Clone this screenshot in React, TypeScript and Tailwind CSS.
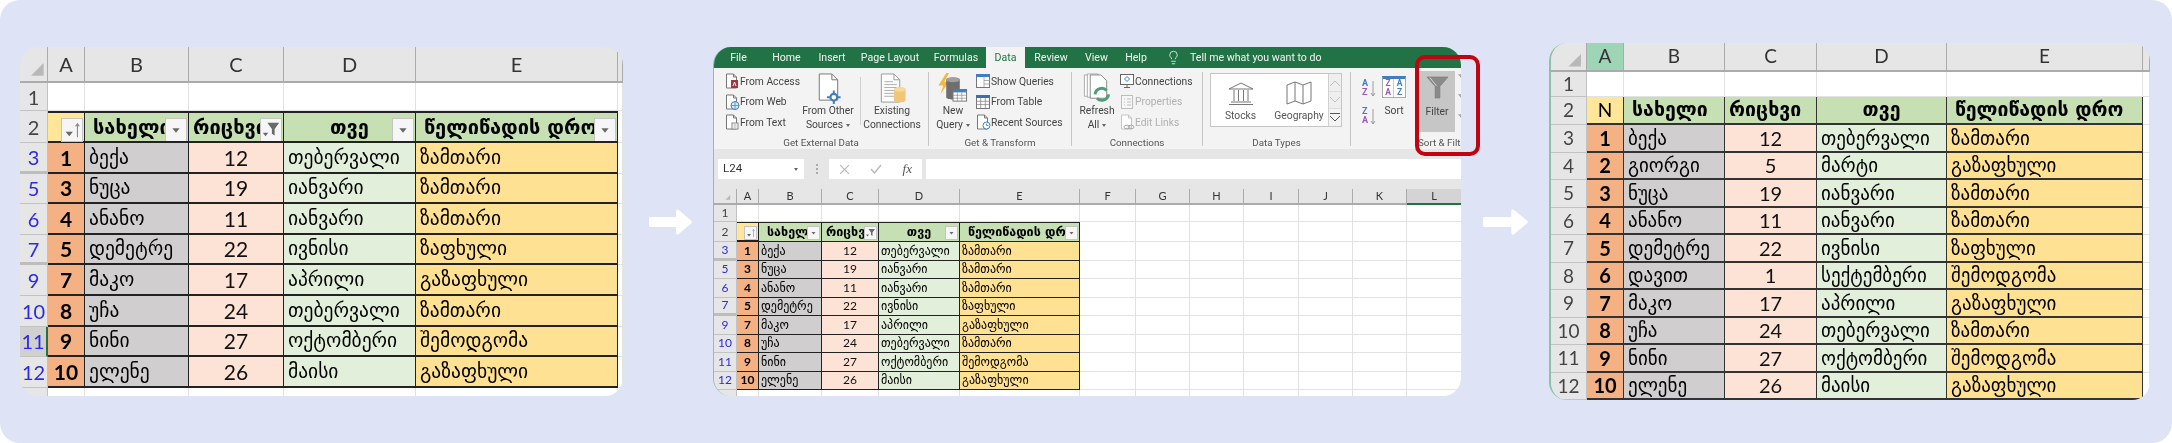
import React from "react";
import { Lightbulb } from "lucide-react";

type P = [number, string, number, string, string];
const people: P[] = [
  [1, "ბექა", 12, "თებერვალი", "ზამთარი"],
  [2, "გიორგი", 5, "მარტი", "გაზაფხული"],
  [3, "ნუცა", 19, "იანვარი", "ზამთარი"],
  [4, "ანანო", 11, "იანვარი", "ზამთარი"],
  [5, "დემეტრე", 22, "ივნისი", "ზაფხული"],
  [6, "დავით", 1, "სექტემბერი", "შემოდგომა"],
  [7, "მაკო", 17, "აპრილი", "გაზაფხული"],
  [8, "უჩა", 24, "თებერვალი", "ზამთარი"],
  [9, "ნინი", 27, "ოქტომბერი", "შემოდგომა"],
  [10, "ელენე", 26, "მაისი", "გაზაფხული"],
];

const KA = "font-['DejaVu_Sans',sans-serif]";
const LA = "font-['Lato',sans-serif]";
const UI = "font-['Roboto',sans-serif]";

function FilterBtn({ kind, cls }: { kind: "down" | "funnel" | "sort"; cls: string }) {
  return (
    <span className={"absolute bg-[#f6f6f6] border border-[#c4c4c4] " + cls}>
      <svg viewBox="0 0 22 24" className="w-full h-full block">
        {kind === "down" && <path d="M7 10h8l-4 5z" fill="#6a6a6a" />}
        {kind === "funnel" && (
          <>
            <path d="M7 4h13l-5 7v7l-3-2v-5z" fill="#6a6a6a" />
            <path d="M2 15h6l-3 4z" fill="#6a6a6a" />
          </>
        )}
        {kind === "sort" && (
          <>
            <path d="M4 14h8l-4 5z" fill="#6a6a6a" />
            <path d="M17 20V5M15 8l2-3 2 3" stroke="#8a8a8a" strokeWidth="1.2" fill="none" />
          </>
        )}
      </svg>
    </span>
  );
}

type Cfg = {
  grid: string;
  size: string;
  cols: string[];
  rows: number[];
  filter: boolean;
  blueRows: boolean;
  colText: string;
  rowText: string;
  bodyText: string;
  numText: string;
  boldText: string;
  headText: string;
  line: string;
  pad: string;
  btn: string;
  selectedRow?: number;
  thick: number[];
  selectedCol?: boolean;
  partial: boolean;
  headTop: string;
};

function Sheet({ c }: { c: Cfg }) {
  const rh = "flex items-center justify-center bg-[#e6e6e6] border-b border-r border-[#c2c2c2] text-[#444] " + LA + " " + c.rowText;
  const blank = "bg-white border-b border-r border-[#e2e2e2]";
  const headNames = ["სახელი", "რიცხვი", "თვე", "წელიწადის დრო"];
  const kinds: ("down" | "funnel")[] = ["down", "funnel", "down", "down"];
  const extras = c.cols.slice(5);
  return (
    <div className={"grid " + c.grid + " " + c.size}>
      <div className="bg-[#e6e6e6] border-b-2 border-r border-[#ababab] flex items-end justify-end p-[3px]">
        <svg viewBox="0 0 10 10" className="w-[60%] h-[60%] block">
          <path d="M10 0v10H0z" fill="#b8b8b8" />
        </svg>
      </div>
      {c.cols.map((l, i) => (
        <div
          key={i}
          className={
            "flex items-center justify-center border-b-2 border-r border-[#ababab] text-[#333] " +
            LA + " " + c.colText + " " +
            (c.selectedCol && l === "A" ? "bg-[#9fd5b7]" : l === "L" ? "bg-[#d4d4d4] !border-b-[#217346]" : "bg-[#e6e6e6]")
          }
        >
          {l}
        </div>
      ))}

      <div className={rh}>1</div>
      {c.cols.map((_, i) => (
        <div key={i} className={blank} />
      ))}

      <div className={rh}>2</div>
      <div className={"relative flex items-center justify-center bg-[#ffe699] border-r border-b-2 text-black " + c.headTop + " " + c.line + " " + LA + " " + c.rowText}>
        {c.filter ? <FilterBtn kind="sort" cls={c.btn} /> : "N"}
      </div>
      {headNames.map((h, i) => (
        <div
          key={h}
          className={
            "relative flex items-center overflow-hidden whitespace-nowrap bg-[#c6e0b4] text-black font-bold " +
            c.headTop + " " + c.line + " " + KA + " " + c.headText + " " + (i === 2 ? "justify-center" : i === 1 ? "pl-[4px]" : "pl-[8px]")
          }
        >
          {h}
          {c.filter && <FilterBtn kind={kinds[i]} cls={c.btn} />}
        </div>
      ))}
      {extras.map((_, i) => (
        <div key={i} className={blank} />
      ))}

      {people
        .filter((p) => c.rows.includes(p[0]))
        .map((p) => {
          const n = p[0] + 2;
          const sel = c.selectedRow === n;
          return (
            <React.Fragment key={n}>
              <div
                className={
                  "flex items-center justify-center " + LA + " " + c.rowText + " " +
                  (c.blueRows ? "text-[#2a2ae8] " : "text-[#444] ") +
                  (sel ? "bg-[#d0d0d0] border-r-2 border-[#217346] " : "bg-[#e6e6e6] border-r border-[#c2c2c2] ") +
                  (c.thick.includes(n) ? "border-b-[3px] border-b-[#bdbdbd]" : "border-b border-b-[#c2c2c2]")
                }
              >
                {n}
              </div>
              <div className={"flex items-center justify-center bg-[#f4b183] text-black font-bold " + LA + " " + c.boldText + " " + c.line}>{p[0]}</div>
              <div className={"flex items-center whitespace-nowrap overflow-hidden bg-[#d0cece] text-black " + KA + " " + c.bodyText + " " + c.pad + " " + c.line}>{p[1]}</div>
              <div className={"flex items-center justify-center bg-[#fde3d6] text-[#111] " + LA + " " + c.numText + " " + c.line}>{p[2]}</div>
              <div className={"flex items-center whitespace-nowrap overflow-hidden bg-[#e2efda] text-black " + KA + " " + c.bodyText + " " + c.pad + " " + c.line}>{p[3]}</div>
              <div className={"flex items-center whitespace-nowrap overflow-hidden bg-[#ffe193] text-black " + KA + " " + c.bodyText + " " + c.pad + " " + c.line}>{p[4]}</div>
              {extras.map((_, i) => (
                <div key={i} className={blank} />
              ))}
            </React.Fragment>
          );
        })}

      {c.partial && (
        <>
          <div className="bg-[#e6e6e6] border-r border-[#c2c2c2]" />
          {c.cols.map((_, i) => (
            <div key={i} className="bg-white border-r border-[#e2e2e2]" />
          ))}
        </>
      )}
    </div>
  );
}

const filtered = [1, 3, 4, 5, 7, 8, 9, 10];

const leftCfg: Cfg = {
  grid: "grid-cols-[28px_37px_104px_95px_132px_202px_5px] grid-rows-[36px_28px_32px_repeat(8,30.6px)_8px]",
  size: "w-[603px] h-[349px]",
  cols: ["A", "B", "C", "D", "E", ""],
  rows: filtered,
  filter: true,
  blueRows: true,
  colText: "text-[20px]",
  rowText: "text-[20px]",
  bodyText: "text-[19.5px]",
  numText: "text-[21px]",
  boldText: "text-[21px]",
  headText: "text-[20px]",
  line: "border-b-2 border-r border-[#222]",
  pad: "pl-[4px]",
  btn: "right-[1px] top-[5px] w-[22px] h-[24px]",
  selectedRow: 11,
  thick: [3, 7],
  partial: true,
  headTop: "border-t-2 border-t-[#222]",
};

const midCfg: Cfg = {
  grid: "grid-cols-[23px_22px_63px_57px_81px_120px_56px_54px_54px_55px_54px_54px_55px] grid-rows-[16px_17px_20px_repeat(8,18.5px)_6px]",
  size: "w-[748px] h-[207px]",
  cols: ["A", "B", "C", "D", "E", "F", "G", "H", "I", "J", "K", "L"],
  rows: filtered,
  filter: true,
  blueRows: true,
  colText: "text-[11px]",
  rowText: "text-[12px]",
  bodyText: "text-[12px]",
  numText: "text-[12px]",
  boldText: "text-[12px]",
  headText: "text-[12.5px]",
  line: "border-b border-r border-[#222]",
  pad: "pl-[2px]",
  btn: "right-[1px] top-[3px] w-[13px] h-[14px]",
  thick: [3, 7],
  partial: true,
  headTop: "border-t border-t-[#222]",
};

const rightCfg: Cfg = {
  grid: "grid-cols-[36px_37px_101px_92px_130px_196px_7px] grid-rows-[29px_25px_28px_repeat(10,27.5px)]",
  size: "w-[599px] h-[357px]",
  cols: ["A", "B", "C", "D", "E", ""],
  rows: [1, 2, 3, 4, 5, 6, 7, 8, 9, 10],
  filter: false,
  blueRows: false,
  colText: "text-[19px]",
  rowText: "text-[19px]",
  bodyText: "text-[19px]",
  numText: "text-[20px]",
  boldText: "text-[20px]",
  headText: "text-[19.5px]",
  line: "border-b-2 border-r border-[#333]",
  pad: "pl-[4px]",
  btn: "",
  thick: [],
  selectedCol: true,
  partial: false,
  headTop: "",
};

function Doc({ children, c = "#777" }: { children?: React.ReactNode; c?: string }) {
  return (
    <svg viewBox="0 0 16 16" className="w-[16px] h-[16px] block">
      <path d="M2.5 1h7l3 3v11h-10z" fill="#fff" stroke={c} strokeWidth="1" />
      <path d="M9.5 1v3h3" fill="none" stroke={c} strokeWidth="1" />
      {children}
    </svg>
  );
}

const icoAccess = <Doc><rect x="7" y="7" width="7" height="8" fill="#a4373a" /><path d="M9 13l1.5-4 1.5 4" stroke="#fff" fill="none" /></Doc>;
const icoWeb = <Doc><circle cx="11" cy="11.5" r="4" fill="#dbe8f5" stroke="#3f7fbf" /><path d="M7 11.5h8M11 7.5v8" stroke="#3f7fbf" strokeWidth=".7" /></Doc>;
const icoText = <Doc><rect x="8" y="9" width="6" height="6" fill="#fff" stroke="#888" /><path d="M9.5 11h3M9.5 13h3" stroke="#888" strokeWidth=".7" /></Doc>;
const icoShow = (
  <svg viewBox="0 0 16 16" className="w-[16px] h-[16px] block">
    <rect x="1.5" y="1.5" width="13" height="13" fill="#fff" stroke="#777" />
    <rect x="1" y="1" width="14" height="3" fill="#3f7fbf" />
    <path d="M9 4v10M9 7.5h6M9 11h6" stroke="#999" strokeWidth=".8" />
  </svg>
);
const icoTable = (
  <svg viewBox="0 0 16 16" className="w-[16px] h-[16px] block">
    <rect x="1.5" y="1.5" width="13" height="13" fill="#fff" stroke="#777" />
    <rect x="1" y="1" width="14" height="3" fill="#3f6f9f" />
    <path d="M5.7 4v10M10.3 4v10M1.5 7.3h13M1.5 10.6h13" stroke="#888" strokeWidth=".8" />
  </svg>
);
const icoRecent = <Doc><circle cx="11.5" cy="11.5" r="3.5" fill="#fff" stroke="#3f7fbf" /><path d="M11.5 9.5v2h2" stroke="#3f7fbf" strokeWidth=".8" fill="none" /></Doc>;
const icoConn = (
  <svg viewBox="0 0 16 16" className="w-[16px] h-[16px] block">
    <rect x="1.5" y="1.5" width="13" height="10" fill="#fff" stroke="#666" />
    <path d="M5 14.5h6M8 11.5v3" stroke="#666" />
    <path d="M8 3.5l2.5 2.5L8 8.5 5.500 6z" fill="none" stroke="#3f7fbf" />
  </svg>
);
const icoProps = (
  <svg viewBox="0 0 16 16" className="w-[16px] h-[16px] block">
    <rect x="2.500" y="1.500" width="11" height="13" fill="#f7f7f7" stroke="#bdbdbd" />
    <path d="M5 5h1M8 5h4M5 8h1M8 8h4M5 11h1M8 11h4" stroke="#bdbdbd" />
  </svg>
);
const icoLinks = <Doc c="#c4c4c4"><ellipse cx="8" cy="13" rx="3" ry="1.800" fill="none" stroke="#aaa" /><ellipse cx="12" cy="13" rx="3" ry="1.800" fill="none" stroke="#aaa" /></Doc>;

function Small({ icon, label, muted }: { icon: React.ReactNode; label: string; muted?: boolean }) {
  return (
    <div className={"flex items-center h-[20.500px] gap-[1px] whitespace-nowrap " + (muted ? "text-[#b0b0b0]" : "text-[#444]")}>
      <span className="w-[15px] shrink-0">{icon}</span>
      <span>{label}</span>
    </div>
  );
}

function Big({ icon, a, b, cls }: { icon: React.ReactNode; a: string; b: React.ReactNode; cls: string }) {
  return (
    <div className={"flex flex-col items-center shrink-0 pt-[5px] text-[#444] leading-[14px] whitespace-nowrap " + cls}>
      <div className="h-[31px] flex items-center justify-center">{icon}</div>
      <div>{a}</div>
      <div>{b}</div>
    </div>
  );
}

function Caret() {
  return <span className="inline-block align-middle ml-[3px] w-0 h-0 border-l-[2.500px] border-r-[2.500px] border-t-[3px] border-l-transparent border-r-transparent border-t-[#666]" />;
}

function Group({ w, label, children, labelCls }: { w: string; label: string; children: React.ReactNode; labelCls?: string }) {
  return (
    <div className={"flex flex-col shrink-0 overflow-hidden " + w}>
      <div className="flex h-[68px]">{children}</div>
      <div className={"h-[13px] leading-[13px] text-[9.800px] text-[#555] whitespace-nowrap " + (labelCls ?? "text-center")}>{label}</div>
    </div>
  );
}

function Sep() {
  return <div className="w-px shrink-0 mt-[4px] mb-[3px] bg-[#c6c6c6]" />;
}

function Funnel({ cls, c = "#8a8a8a" }: { cls: string; c?: string }) {
  return (
    <svg viewBox="0 0 24 24" className={cls}>
      <path d="M1 1h22l-8.500 10v12h-5V11z" fill={c} stroke="#777" strokeWidth=".6" />
      <path d="M4 1.500l7 9" stroke="#d8d8d8" strokeWidth="1" />
    </svg>
  );
}

function AZ({ top, bottom }: { top: string; bottom: string }) {
  return (
    <div className="relative h-[20px] w-[14px] text-[9px] leading-[9px] font-bold">
      <div className="text-[#3f7fbf]">{top}</div>
      <div className="text-[#9b59b6]">{bottom}</div>
      <svg viewBox="0 0 6 18" className="absolute left-[8px] top-[1px] w-[6px] h-[18px]">
        <path d="M3 1v15M1 13l2 3 2-3" stroke="#888" fill="none" strokeWidth=".8" />
      </svg>
    </div>
  );
}

function Ribbon() {
  const tabs: [string, string][] = [
    ["File", "w-[49px]"],
    ["Home", "w-[47px]"],
    ["Insert", "w-[44px]"],
    ["Page Layout", "w-[72px]"],
    ["Formulas", "w-[60px]"],
    ["Data", "w-[39px]"],
    ["Review", "w-[52px]"],
    ["View", "w-[39px]"],
    ["Help", "w-[40px]"],
  ];
  return (
    <div className={UI + " text-[10.300px]"}>
      <div className="flex h-[21px] bg-[#217346] text-[#f0f6f2] text-[10.600px]">
        {tabs.map(([t, w]) => (
          <div key={t} className={"flex items-center justify-center " + w + (t === "Data" ? " bg-[#f3f3f3] text-[#217346]" : "")}>{t}</div>
        ))}
        <div className="w-[34px] flex items-center justify-center">
          <Lightbulb size={15} strokeWidth={1.300} />
        </div>
        <div className="flex items-center whitespace-nowrap">Tell me what you want to do</div>
      </div>
      <div className="flex h-[81px] bg-[#f3f3f3]">
        <Group w="w-[214px]" label="Get External Data">
          <div className="pl-[10px] pt-[3px] w-[86px] shrink-0">
            <Small icon={icoAccess} label="From Access" />
            <Small icon={icoWeb} label="From Web" />
            <Small icon={icoText} label="From Text" />
          </div>
          <Big
            cls="w-[56px]"
            icon={
              <svg viewBox="0 0 30 32" className="w-[30px] h-[31px]">
                <path d="M6 1h13l6 6v21H6z" fill="#fff" stroke="#777" />
                <path d="M19 1v6h6" fill="none" stroke="#777" />
                <circle cx="21" cy="25" r="3.500" fill="#fff" stroke="#3f7fbf" strokeWidth="2.200" />
                <path d="M21 18v3M21 29v3M14 25h3M25 25h3" stroke="#3f7fbf" strokeWidth="2" />
              </svg>
            }
            a="From Other"
            b={<>Sources<Caret /></>}
          />
          <div className="w-px h-[48px] mt-[9px] ml-[4px] bg-[#d0d0d0] shrink-0" />
          <Big
            cls="w-[62px]"
            icon={
              <svg viewBox="0 0 30 32" className="w-[30px] h-[31px]">
                <path d="M4 1h13l6 6v23H4z" fill="#fff" stroke="#999" />
                <path d="M17 1v6h6" fill="none" stroke="#999" />
                <path d="M7 9h9M7 12h13M7 15h13M7 18h10M7 21h10M7 24h10" stroke="#aaa" />
                <path d="M17 17c0-3 12-3 12 0v11c0 3-12 3-12 0z" fill="#f2c678" />
                <ellipse cx="23" cy="17" rx="6" ry="2.200" fill="#f7d999" />
              </svg>
            }
            a="Existing"
            b="Connections"
          />
        </Group>
        <Sep />
        <Group w="w-[142px]" label="Get & Transform">
          <Big
            cls="w-[44px] ml-[2px]"
            icon={
              <svg viewBox="0 0 30 32" className="w-[30px] h-[31px]">
                <path d="M8 0L0 13h5l-3 9 9-13H6l5-9z" fill="#f2b844" />
                <path d="M8 7c0-3 14-3 14 0v18c0 3-14 3-14 0z" fill="#6e6e6e" />
                <ellipse cx="15" cy="7" rx="7" ry="2.500" fill="#a0a0a0" />
                <rect x="15" y="17" width="14" height="12" fill="#fff" stroke="#777" />
                <rect x="15" y="17" width="14" height="3" fill="#3f7fbf" />
                <path d="M19.500 20v9M24 20v9M15 23h14M15 26h14" stroke="#888" strokeWidth=".7" />
              </svg>
            }
            a="New"
            b={<>Query<Caret /></>}
          />
          <div className="pt-[3px]">
            <Small icon={icoShow} label="Show Queries" />
            <Small icon={icoTable} label="From Table" />
            <Small icon={icoRecent} label="Recent Sources" />
          </div>
        </Group>
        <Sep />
        <Group w="w-[130px]" label="Connections">
          <Big
            cls="w-[40px] ml-[5px]"
            icon={
              <svg viewBox="0 0 30 32" className="w-[30px] h-[31px]">
                <path d="M2 2h11v22H2z" fill="#fff" stroke="#aaa" />
                <path d="M5 1h11v24H5z" fill="#fff" stroke="#aaa" />
                <path d="M8 2h11l6 6v18H8z" fill="#fff" stroke="#888" />
                <path d="M13 22a7 7 0 0 1 12-4" fill="none" stroke="#4f9d7a" strokeWidth="3" />
                <path d="M27 22a7 7 0 0 1-12 4" fill="none" stroke="#4f9d7a" strokeWidth="3" />
              </svg>
            }
            a="Refresh"
            b={<>All<Caret /></>}
          />
          <div className="pl-[2px] pt-[3px]">
            <Small icon={icoConn} label="Connections" />
            <Small icon={icoProps} label="Properties" muted />
            <Small icon={icoLinks} label="Edit Links" muted />
          </div>
        </Group>
        <Sep />
        <Group w="w-[147px]" label="Data Types">
          <div className="ml-[7px] mt-[5px] w-[132px] h-[54px] flex bg-white border border-[#c6c6c6] text-[#555]">
            <div className="w-[59px] flex flex-col items-center pt-[7px]">
              <svg viewBox="0 0 26 24" className="w-[26px] h-[24px]" fill="none" stroke="#777">
                <path d="M1 8l12-6 12 6zM3 21h20M1 23.500h24M6 9v11M10.500 9v11M15.500 9v11M20 9v11" />
              </svg>
              <span className="mt-[3px]">Stocks</span>
            </div>
            <div className="w-[58px] flex flex-col items-center pt-[7px]">
              <svg viewBox="0 0 26 24" className="w-[26px] h-[24px]" fill="none" stroke="#777">
                <path d="M1 4l8-3 8 3 8-3v19l-8 3-8-3-8 3zM9 1v19M17 4v19" />
              </svg>
              <span className="mt-[3px]">Geography</span>
            </div>
            <div className="w-[13px] flex flex-col border-l border-[#d0d0d0]">
              <div className="h-[18px] flex items-center justify-center bg-[#efefef] border-b border-[#ddd]">
                <svg viewBox="0 0 10 6" className="w-[10px] h-[6px]"><path d="M0 6l5-5 5 5" fill="none" stroke="#c0c0c0" /></svg>
              </div>
              <div className="h-[17px] flex items-center justify-center bg-[#efefef] border-b border-[#ddd]">
                <svg viewBox="0 0 10 6" className="w-[10px] h-[6px]"><path d="M0 0l5 5 5-5" fill="none" stroke="#c0c0c0" /></svg>
              </div>
              <div className="flex-1 flex flex-col items-center justify-center gap-[2px] bg-[#f4f4f4]">
                <div className="w-[10px] h-px bg-[#555]" />
                <svg viewBox="0 0 10 6" className="w-[10px] h-[6px]"><path d="M0 0l5 5 5-5" fill="none" stroke="#555" /></svg>
              </div>
            </div>
          </div>
        </Group>
        <Sep />
        <Group w="w-[111px]" label="Sort & Filter" labelCls="pl-[67px]">
          <div className="ml-[11px] mt-[11px] w-[14px] shrink-0 flex flex-col gap-[8px]">
            <AZ top="A" bottom="Z" />
            <AZ top="Z" bottom="A" />
          </div>
          <div className="ml-[3px] w-[30px] shrink-0 pt-[8px] flex flex-col items-center text-[#444]">
            <div className="w-[24px] h-[22px] grid grid-cols-2 border border-[#aaa] border-t-[3px] border-t-[#3f7fbf] bg-white text-[8.500px] leading-[8.500px] font-bold text-center">
              <div className="text-[#9b59b6] border-r border-[#ccc]">Z<br />A</div>
              <div className="text-[#3f7fbf]">A<br />Z</div>
            </div>
            <span className="mt-[5px]">Sort</span>
          </div>
          <div className="ml-[10px] mt-[3px] w-[36px] h-[61px] shrink-0 bg-[#c6c6c6] flex flex-col items-center pt-[5px] text-[#444]">
            <Funnel cls="w-[23px] h-[23px]" />
            <span className="mt-[5px]">Filter</span>
          </div>
          <div className="ml-[3px] pt-[6px] flex flex-col gap-[10px] shrink-0">
            <Funnel cls="w-[10px] h-[10px]" c="#9a9a9a" />
            <Funnel cls="w-[10px] h-[10px]" c="#9a9a9a" />
            <Funnel cls="w-[10px] h-[10px]" c="#9a9a9a" />
          </div>
        </Group>
      </div>
      <div className="h-[10px] bg-[#e6e6e6]" />
      <div className="flex h-[20px] bg-[#e6e6e6] text-[#333] text-[11.500px]">
        <div className="ml-[4px] w-[86px] bg-white flex items-center justify-between pl-[5px] pr-[6px]">
          L24
          <Caret />
        </div>
        <div className="w-[25px] flex items-center justify-center">
          <div className="w-[2px] h-[10px] border-l-2 border-dotted border-[#aaa]" />
        </div>
        <div className="w-[93px] bg-white flex items-center justify-between pl-[10px] pr-[10px] text-[#aaa]">
          <svg viewBox="0 0 10 10" className="w-[11px] h-[11px]"><path d="M1 1l8 8M9 1l-8 8" stroke="#bbb" strokeWidth="1.200" /></svg>
          <svg viewBox="0 0 12 10" className="w-[12px] h-[10px]"><path d="M1 5l3.500 4L11 1" stroke="#bbb" strokeWidth="1.500" fill="none" /></svg>
          <span className="font-['Liberation_Serif',serif] italic text-[#555] text-[13px]">fx</span>
        </div>
        <div className="ml-[4px] flex-1 bg-white" />
      </div>
      <div className="h-[10px] bg-[#e6e6e6]" />
    </div>
  );
}

function Arrow({ w }: { w: string }) {
  return (
    <svg viewBox="0 0 44 26" className={"shrink-0 h-[26px] " + w} preserveAspectRatio="none">
      <path d="M1 9.500a1.500 1.500 0 0 1 1.500-1.500H28V2c0-1.500 1.500-2 2.800-1L43 11.500c1.200 1 1.200 2 0 3L30.800 25c-1.300 1-2.800.5-2.800-1v-6H2.500A1.500 1.500 0 0 1 1 16.500z" fill="#fff" />
    </svg>
  );
}

export default function App() {
  return (
    <div className="w-[2172px] h-[443px] bg-white overflow-hidden">
      <div className="w-full h-full bg-[#dfe3f6] rounded-[20px] flex items-center pl-[20px] blur-[0.35px]">
        <div className="rounded-[18px] overflow-hidden shrink-0 w-[603px]">
          <Sheet c={leftCfg} />
        </div>
        <div className="ml-[25px] mr-[21px] shrink-0">
          <Arrow w="w-[44px]" />
        </div>
        <div className="relative shrink-0 w-[748px]">
          <div className="rounded-[18px] overflow-hidden border-l border-[#8fc0a8] h-[349px]">
            <Ribbon />
            <Sheet c={midCfg} />
          </div>
          <div className="absolute left-[702px] top-[8px] w-[65px] h-[101px] border-[4px] border-[#bd0611] rounded-[10px]" />
        </div>
        <div className="ml-[21px] mr-[21px] shrink-0">
          <Arrow w="w-[46px]" />
        </div>
        <div className="rounded-[18px] overflow-hidden shrink-0 w-[601px] border-l-2 border-[#8fc0a8]">
          <Sheet c={rightCfg} />
        </div>
      </div>
    </div>
  );
}
